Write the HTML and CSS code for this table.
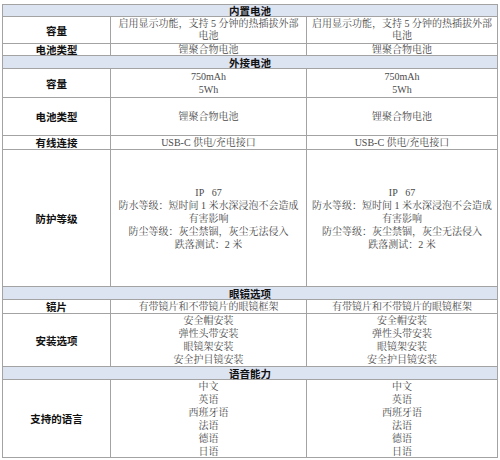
FILE: index.html
```html
<!DOCTYPE html>
<html lang="zh-CN">
<head>
<meta charset="utf-8">
<link rel="stylesheet" href="styles.css">
</head>
<body>
<div class="spec">
  <div class="sec">内置电池</div>

  <div class="lab">容量</div>
  <div class="val tight"><span>启用显示功能，支持 5 分钟的热插拔外部</span><span>电池</span></div>
  <div class="val tight"><span>启用显示功能，支持 5 分钟的热插拔外部</span><span>电池</span></div>

  <div class="lab">电池类型</div>
  <div class="val"><span>锂聚合物电池</span></div>
  <div class="val"><span>锂聚合物电池</span></div>

  <div class="sec">外接电池</div>

  <div class="lab">容量</div>
  <div class="val"><span>750mAh</span><span>5Wh</span></div>
  <div class="val"><span>750mAh</span><span>5Wh</span></div>

  <div class="lab">电池类型</div>
  <div class="val"><span>锂聚合物电池</span></div>
  <div class="val"><span>锂聚合物电池</span></div>

  <div class="lab">有线连接</div>
  <div class="val"><span>USB-C 供电/充电接口</span></div>
  <div class="val"><span>USB-C 供电/充电接口</span></div>

  <div class="lab">防护等级</div>
  <div class="val"><span>IP&nbsp;&nbsp;&nbsp;67</span><span>防水等级：短时间 1 米水深浸泡不会造成</span><span>有害影响</span><span>防尘等级：灰尘禁锢，灰尘无法侵入</span><span>跌落测试：2 米</span></div>
  <div class="val"><span>IP&nbsp;&nbsp;&nbsp;67</span><span>防水等级：短时间 1 米水深浸泡不会造成</span><span>有害影响</span><span>防尘等级：灰尘禁锢，灰尘无法侵入</span><span>跌落测试：2 米</span></div>

  <div class="sec">眼镜选项</div>

  <div class="lab">镜片</div>
  <div class="val"><span>有带镜片和不带镜片的眼镜框架</span></div>
  <div class="val"><span>有带镜片和不带镜片的眼镜框架</span></div>

  <div class="lab">安装选项</div>
  <div class="val"><span>安全帽安装</span><span>弹性头带安装</span><span>眼镜架安装</span><span>安全护目镜安装</span></div>
  <div class="val"><span>安全帽安装</span><span>弹性头带安装</span><span>眼镜架安装</span><span>安全护目镜安装</span></div>

  <div class="sec">语音能力</div>

  <div class="lab">支持的语言</div>
  <div class="val"><span>中文</span><span>英语</span><span>西班牙语</span><span>法语</span><span>德语</span><span>日语</span></div>
  <div class="val"><span>中文</span><span>英语</span><span>西班牙语</span><span>法语</span><span>德语</span><span>日语</span></div>
</div>
</body>
</html>
```

FILE: styles.css
```css
html, body {
  margin: 0;
  padding: 0;
  background: #ffffff;
}

body {
  padding: 4px 0 0 2px;
}

.spec {
  display: grid;
  width: 494px;
  grid-template-columns: 107px 195px 190px;
  grid-template-rows: 11px 26px 11px 12px 28px 37px 13px 136px 12px 13px 52px 12px 77px;
  gap: 1px;
  padding: 1px;
  background: #a3a3a3;
}

.spec > div {
  display: flex;
  flex-direction: column;
  align-items: center;
  justify-content: center;
  text-align: center;
  background: #ffffff;
  white-space: nowrap;
}

.sec {
  grid-column: 1 / -1;
  background: #dce3f1 !important;
  font-family: "Noto Sans CJK SC", "Noto Sans", sans-serif;
  font-weight: 700;
  font-size: 10.5px;
  line-height: 11px;
  color: #111111;
}

.lab {
  font-family: "Noto Sans CJK SC", "Noto Sans", sans-serif;
  font-weight: 700;
  font-size: 10.5px;
  line-height: 11px;
  color: #111111;
}

.val {
  font-family: "Liberation Serif", "Noto Serif CJK SC", "Noto Sans CJK SC", serif;
  font-size: 10px;
  line-height: 13px;
  color: #4a4a4a;
}

.val span {
  display: block;
}

.tight {
  line-height: 12px;
}
```
